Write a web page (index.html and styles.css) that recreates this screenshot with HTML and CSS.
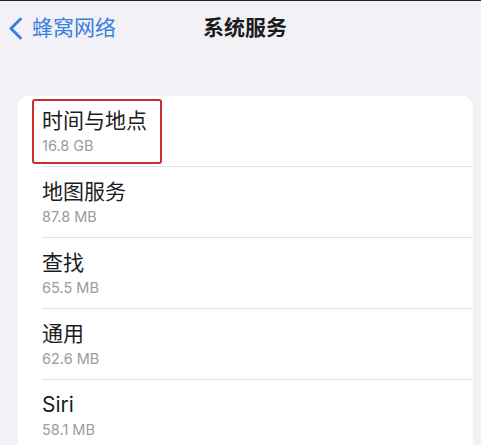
FILE: index.html
```html
<!DOCTYPE html>
<html lang="zh-CN">
<head>
<meta charset="utf-8">
<title>系统服务</title>
<link rel="stylesheet" href="styles.css">
</head>
<body>
<div class="screen">
  <header class="nav">
    <a class="back" href="#">
      <svg class="chev" width="15" height="23" viewBox="0 0 15 23"><path d="M12.5 2 L3 11.5 L12.5 21" fill="none" stroke="currentColor" stroke-width="3" stroke-linecap="round" stroke-linejoin="round"/></svg>
      <span>蜂窝网络</span>
    </a>
    <h1 class="title">系统服务</h1>
  </header>
  <ul class="card">
    <li class="row">
      <div class="name">时间与地点</div>
      <div class="size">16.8 GB</div>
      <span class="mark"></span>
    </li>
    <li class="row">
      <div class="name">地图服务</div>
      <div class="size">87.8 MB</div>
    </li>
    <li class="row">
      <div class="name">查找</div>
      <div class="size">65.5 MB</div>
    </li>
    <li class="row">
      <div class="name">通用</div>
      <div class="size">62.6 MB</div>
    </li>
    <li class="row">
      <div class="name">Siri</div>
      <div class="size">58.1 MB</div>
    </li>
  </ul>
</div>
</body>
</html>
```
FILE: styles.css
```css
html, body {
  margin: 0;
  padding: 0;
  background: #f2f2f6;
  overflow: hidden;
}
body {
  font-family: "Inter", "Noto Sans CJK SC", sans-serif;
  color: #1c1c1e;
}
.screen {
  width: 481px;
  height: 445px;
  border-top: 1px solid #222;
  box-sizing: border-box;
  overflow: hidden;
}
.nav {
  position: relative;
  height: 55px;
  display: flex;
  align-items: center;
}
.back {
  display: flex;
  align-items: center;
  gap: 9px;
  padding-left: 8px;
  color: #3a80de;
  text-decoration: none;
  font-size: 21px;
  line-height: 24px;
  margin-top: -1px;
}
.chev { display: block; }
.title {
  position: absolute;
  left: 0;
  right: 0;
  top: 14px;
  margin: 0;
  text-align: center;
  font-size: 21px;
  line-height: 26px;
  font-weight: 700;
  padding-left: 9px;
}
.card {
  list-style: none;
  margin: 40px 8px 0 18px;
  padding: 0;
  background: #fff;
  border-radius: 11px 11px 0 0;
  overflow: hidden;
}
.row {
  position: relative;
  margin-left: 24px;
  padding: 11px 0 11px 0;
  border-bottom: 1px solid #e2e2e6;
}
.name {
  font-size: 21px;
  line-height: 27px;
}
.size {
  margin-top: 3px;
  font-size: 14.5px;
  line-height: 18px;
  color: #9b9ba0;
}
.mark {
  position: absolute;
  left: -10px;
  top: 3px;
  width: 126px;
  height: 61px;
  border: 2px solid #c8302c;
  border-radius: 3px;
}
```
